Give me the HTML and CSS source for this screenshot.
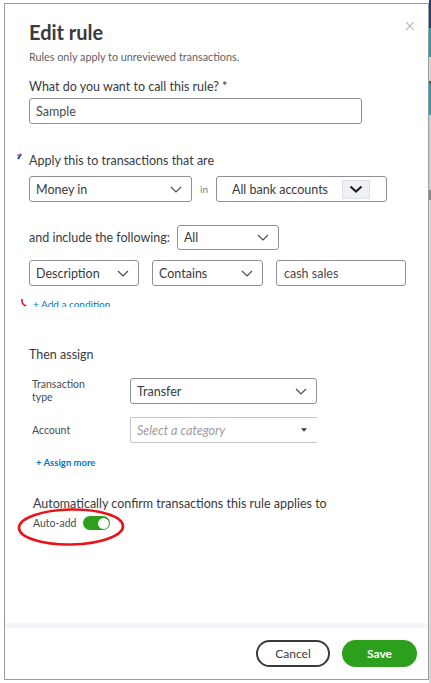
FILE: index.html
```html
<!DOCTYPE html>
<html lang="en">
<head>
<meta charset="utf-8">
<title>Edit rule</title>
<link rel="stylesheet" href="styles.css">
</head>
<body>
<div class="page">
  <div class="modal">
    <div class="body">
      <div class="header">
        <h1 class="title">Edit rule</h1>
        <span class="close">×</span>
      </div>
      <p class="subtitle">Rules only apply to unreviewed transactions.</p>
      <div class="label">What do you want to call this rule? *</div>
      <div class="input name-input">Sample</div>

      <div class="label apply-label">Apply this to transactions that are</div>
      <div class="row row-apply">
        <div class="select w-money">Money in<svg class="chev" viewBox="0 0 12 7"><path d="M1 1l5 5 5-5"/></svg></div>
        <span class="in">in</span>
        <div class="select w-bank">All bank accounts<span class="boxchev"><svg viewBox="0 0 14 8"><path d="M1.5 1.5l5.5 5 5.5-5"/></svg></span></div>
      </div>

      <div class="row row-include">
        <span class="label inline">and include the following:</span>
        <div class="select w-all">All<svg class="chev" viewBox="0 0 12 7"><path d="M1 1l5 5 5-5"/></svg></div>
      </div>

      <div class="row row-cond">
        <div class="select w-desc">Description<svg class="chev" viewBox="0 0 12 7"><path d="M1 1l5 5 5-5"/></svg></div>
        <div class="select w-cont">Contains<svg class="chev" viewBox="0 0 12 7"><path d="M1 1l5 5 5-5"/></svg></div>
        <div class="input w-cash">cash sales</div>
      </div>
      <div class="addcond"><span>+ Add a condition</span></div>

      <div class="label then">Then assign</div>
      <div class="assign">
        <span class="small-label">Transaction<br>type</span>
        <div class="select w-type">Transfer<svg class="chev" viewBox="0 0 12 7"><path d="M1 1l5 5 5-5"/></svg></div>
        <span class="small-label">Account</span>
        <div class="select w-acct placeholder">Select a category<svg class="caret" viewBox="0 0 7 4"><path d="M0 0h7L3.5 4z"/></svg></div>
      </div>
      <div class="assignmore">+ Assign more</div>

      <div class="label auto">Automatically confirm transactions this rule applies to</div>
      <div class="autoadd">
        <span class="small-label">Auto-add</span>
        <span class="toggle"><span class="knob"></span></span>
      </div>
    </div>
    <div class="footer">
      <button class="btn cancel">Cancel</button>
      <button class="btn save">Save</button>
    </div>

    <svg class="mark ellipse" viewBox="0 0 108 40"><ellipse cx="54" cy="20" rx="52" ry="17.5" transform="rotate(-1 54 20)"/></svg>
    <svg class="mark arc1" viewBox="0 0 6 8"><path d="M1 7 L4 2" stroke="#1d4fa0" stroke-width="2"/><path d="M0.5 4 L1.5 2" stroke="#e8141b" stroke-width="1"/></svg>
    <svg class="mark arc2" viewBox="0 0 8 10"><path d="M2 1 Q1 6 6 8" fill="none" stroke="#e8141b" stroke-width="1.6"/></svg>
  </div>
  <div class="strip"></div>
</div>
</body>
</html>
```

FILE: styles.css
```css
* { box-sizing: border-box; }
html, body { margin: 0; padding: 0; background: #ffffff; }
body {
  font-family: Lato, "Open Sans", "Liberation Sans", sans-serif;
  color: #393a3d;
  width: 431px;
  height: 683px;
  overflow: hidden;
}
.page {
  display: flex;
  align-items: flex-start;
  padding-top: 3px;
  padding-left: 4px;
}
.modal {
  position: relative;
  width: 425px;
  height: 677px;
  border: 1px solid #9c9c9c;
  background: #fff;
  display: flex;
  flex-direction: column;
}
.strip {
  width: 2px;
  height: 683px;
  margin-top: -3px;
  background: linear-gradient(#22407a 0 28px, #22a1a8 28px 57px, #d4d4d4 57px 81px, #555 81px 84px, #22a1a8 84px 115px, #cfcfcf 115px 190px, #888 190px 200px, #d8d8d8 200px);
}
.body {
  flex: 1;
  padding: 14px 12px 0 24px;
  display: flex;
  flex-direction: column;
  align-items: flex-start;
}
.header {
  display: flex;
  justify-content: space-between;
  align-items: flex-start;
  width: 100%;
}
.title {
  margin: 0;
  font-size: 20px;
  line-height: 28px;
  font-weight: 700;
  color: #393a3d;
}
.close {
  font-size: 15px;
  line-height: 14px;
  margin-top: 1px;
  color: #a3a3a3;
  font-family: "DejaVu Sans", sans-serif;
  font-weight: 300;
}
.subtitle {
  margin: 4px 0 0;
  font-size: 10.8px;
  line-height: 14px;
  color: #5f6064;
}
.label {
  font-size: 12.5px;
  line-height: 18px;
  color: #393a3d;
  margin-top: 14px;
}
.label.inline { margin-top: 0; }
.input, .select {
  border: 1px solid #8d9096;
  border-radius: 3px;
  background: #fff;
  font-size: 12.5px;
  color: #393a3d;
  display: flex;
  align-items: center;
  padding-left: 6px;
}
.input { color: #4a4b50; }
.name-input { margin-top: 2px; width: 333px; height: 26px; }
.apply-label { margin-top: 28px; }
.row { display: flex; align-items: center; }
.row-apply { margin-top: 6px; height: 26px; }
.select { justify-content: space-between; padding-right: 9px; height: 100%; }
.chev { width: 12px; height: 7px; fill: none; stroke: #4a4b50; stroke-width: 1.2; }
.w-money { width: 163px; }
.in { font-size: 10px; color: #7a7b80; margin: 0 8px 0 8px; }
.w-bank { width: 171px; padding-left: 15px; padding-right: 16px; }
.boxchev {
  width: 28px; height: 19px;
  background: #eef0f4;
  border: 1px solid #dde0e5;
  display: flex; align-items: center; justify-content: center;
}
.boxchev svg { width: 14px; height: 8px; fill: none; stroke: #222; stroke-width: 2.2; }
.row-include { margin-top: 23px; height: 25px; }
.row-include .label { margin-right: 7px; }
.w-all { width: 102px; }
.row-cond { margin-top: 10px; height: 26px; gap: 13px; }
.w-desc { width: 110px; }
.w-cont { width: 111px; }
.w-cash { width: 130px; height: 100%; padding-left: 7px; }
.addcond {
  margin-top: 11px;
  height: 10px;
  overflow: hidden;
  padding-left: 4px;
  font-size: 10px;
  line-height: 14px;
  color: #0077c5;
}
.then { margin-top: 39px; }
.assign {
  margin-top: 14px;
  display: grid;
  grid-template-columns: 98px 187px;
  row-gap: 13px;
  align-items: center;
  padding-left: 3px;
}
.small-label { font-size: 10.5px; line-height: 13px; color: #4a4b50; }
.w-type { height: 26px; }
.w-acct {
  height: 26px;
  border-color: #c4c6ca;
  border-right: none;
  border-radius: 2px 0 0 2px;
  font-style: italic;
  color: #9a9ca1;
  padding-right: 10px;
}
.caret { width: 6px; height: 4px; fill: #393a3d; }
.assignmore {
  margin-top: 13px;
  padding-left: 7px;
  font-size: 9.5px;
  line-height: 14px;
  font-weight: 700;
  color: #0077c5;
}
.auto { margin-top: 25px; padding-left: 4px; }
.autoadd {
  margin-top: 3px;
  padding-left: 4px;
  display: flex;
  align-items: center;
  gap: 7px;
  height: 14px;
}
.toggle {
  width: 27px; height: 14px;
  border-radius: 7px;
  background: #2ca01c;
  display: flex; align-items: center; justify-content: flex-end;
  padding-right: 1.5px;
}
.knob {
  width: 11px; height: 11px; border-radius: 50%;
  background: #fff;
  box-shadow: 0 0 1px rgba(0,0,0,0.3);
}
.footer {
  border-top: 5px solid #f4f5f8;
  padding: 12px 11px 12px 0;
  display: flex;
  justify-content: flex-end;
  gap: 12px;
}
.btn {
  height: 27px;
  border-radius: 14px;
  font-family: inherit;
  font-size: 12px;
  display: flex; align-items: center; justify-content: center;
}
.cancel { width: 74px; background: #fff; border: 2px solid #393a3d; color: #393a3d; }
.save { width: 75px; background: #2ca01c; border: none; color: #fff; font-weight: 700; }
.mark { position: absolute; overflow: visible; }
.ellipse { left: 12px; top: 503px; width: 108px; height: 40px; fill: none; stroke: #e8141b; stroke-width: 2.6; }
.arc1 { left: 12px; top: 148px; width: 6px; height: 8px; }
.arc2 { left: 15px; top: 294px; width: 8px; height: 10px; }
```
